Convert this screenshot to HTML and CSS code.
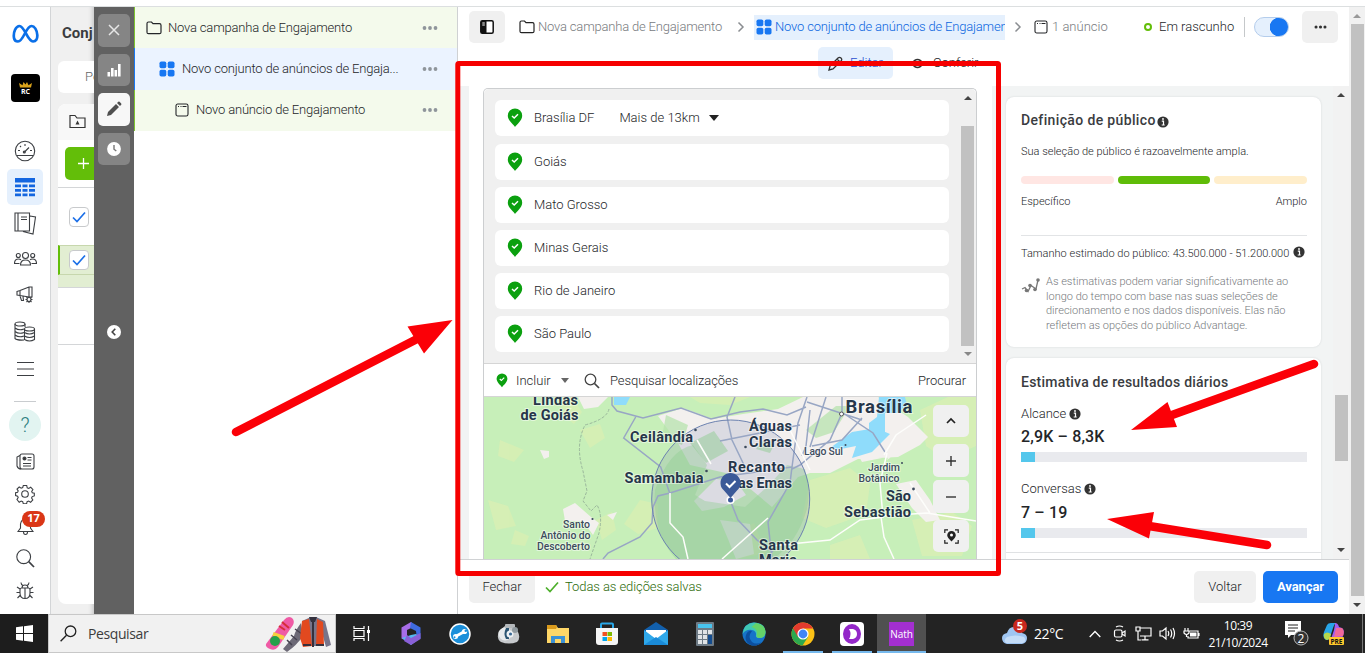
FILE: index.html
```html
<!DOCTYPE html>
<html lang="pt-BR">
<head>
<meta charset="utf-8">
<title>Gerenciador de Anúncios</title>
<link rel="stylesheet" href="styles.css">
</head>
<body>
<svg class="defs" width="0" height="0">
  <symbol id="pin" viewBox="0 0 16 20"><path d="M8 19C6.500 16.500 .8 12.500 .8 7.700a7.200 7.200 0 0 1 14.400 0C15.200 12.500 9.500 16.500 8 19z" fill="#0ba00f"/><path d="M5 8l2.200 2 3.800-3.800" fill="none" stroke="#fff" stroke-width="1.500"/></symbol>
  <symbol id="folder" viewBox="0 0 16 14"><path d="M1 11.200V2.500Q1 1 2.500 1H5.500l1.500 1.700h6.500Q15 2.700 15 4.200v7q0 1.500-1.500 1.500h-11Q1 12.700 1 11.200z" fill="none" stroke="currentColor" stroke-width="1.200"/></symbol>
  <symbol id="grid" viewBox="0 0 16 16"><g fill="#1877f2"><rect x=".5" y=".5" width="6.800" height="6.800" rx="1.800"/><rect x="8.700" y=".5" width="6.800" height="6.800" rx="1.800"/><rect x=".5" y="8.700" width="6.800" height="6.800" rx="1.800"/><rect x="8.700" y="8.700" width="6.800" height="6.800" rx="1.800"/></g></symbol>
  <symbol id="ad" viewBox="0 0 14 14"><rect x="1" y="1" width="12" height="12" rx="1.800" fill="none" stroke="currentColor" stroke-width="1.100"/><path d="M3 3.500h1M5.500 3.500h1M7.500 3.500h4" stroke="currentColor"/></symbol>
  <symbol id="dots" viewBox="0 0 16 4"><g fill="currentColor"><circle cx="2.500" cy="2" r="1.900"/><circle cx="8" cy="2" r="1.900"/><circle cx="13.500" cy="2" r="1.900"/></g></symbol>
  <symbol id="info" viewBox="0 0 12 12"><circle cx="6" cy="6" r="5.600" fill="#333"/><path d="M4.800 5.200H6.500V9M4.700 9h3" fill="none" stroke="#fff" stroke-width="1.200"/><circle cx="6" cy="3" r=".9" fill="#fff"/></symbol>
  <symbol id="chev" viewBox="0 0 8 12"><path d="M1.500 1.500L6 6l-4.500 4.500" fill="none" stroke="#8a8d91" stroke-width="1.500"/></symbol>
  <symbol id="tick" viewBox="0 0 14 12"><path d="M1 6.500l4 4L13 1.500" fill="none" stroke="currentColor" stroke-width="1.700"/></symbol>
</svg>

<div class="screen">
<div class="app">
  <nav class="rail">
    <div class="rail-logo"><svg width="27" height="20" viewBox="0 0 27 20"><path d="M2 14C1 8 4 2 7.500 2c5 0 8 15.500 13.500 15.500 3 0 4.500-2.500 4.300-6.500C25 6 22.500 2 19.500 2c-5.500 0-8 15.500-13.500 15.500C3.500 17.500 2.300 16 2 14z" fill="none" stroke="#0a6fe8" stroke-width="2.700"/></svg></div>
    <div class="rail-logo"><svg width="29" height="28" viewBox="0 0 29 28"><rect width="29" height="28" rx="4" fill="#000"/><path d="M9 13.500L8 9l3.500 2.200L12.500 8l2 2.500L16 8l1.500 3.200L21 9l-1 4.500z" fill="#d9a21b"/><text x="14.500" y="20" class="rc">RC</text></svg></div>
    <div class="rail-item first"><svg width="22" height="22" viewBox="0 0 22 22" class="ln"><circle cx="11" cy="11" r="9.700"/><path d="M3 15.500h16M10 12.500l5-5M4 10.500h2M16 10.500h2M11 4v2M6 6l1 1"/><circle cx="10.300" cy="12" r="1"/></svg></div>
    <div class="rail-item on"><svg width="20" height="19" viewBox="0 0 20 19"><path d="M0 0h20v4.500H0zM0 6.500h6v2.700H0zM7.500 6.500h5v2.700h-5zM14 6.500h6v2.700h-6zM0 11h6v2.700H0zM7.500 11h5v2.700h-5zM14 11h6v2.700h-6zM0 15.500h6v2.700H0zM7.500 15.500h5v2.700h-5zM14 15.500h6v2.700h-6z" fill="#1466e0"/></svg></div>
    <div class="rail-item"><svg width="23" height="23" viewBox="0 0 23 23" class="ln"><path d="M1 1h14.500v18H1zM4 1v18M7 5h6M7 7.500h6M16 4l5.500 1-2.500 17-10-2.500"/></svg></div>
    <div class="rail-item"><svg width="23" height="16" viewBox="0 0 23 16" class="ln"><circle cx="11.500" cy="4.500" r="3"/><circle cx="4.300" cy="4.500" r="2"/><circle cx="18.700" cy="4.500" r="2"/><path d="M6.500 14q0-5 5-5t5 5zM5.500 12.500h-5q0-4.500 4-4.500 1.500 0 2.500.8M17.500 12.500h5q0-4.500-4-4.500-1.500 0-2.500.8"/></svg></div>
    <div class="rail-item"><svg width="18" height="18" viewBox="0 0 18 18" class="ln"><path d="M1 5.500l3-1 9-3.500h3v10h-3L4 9.500l-3-.5zM4 4.500v5M13 1v9M4 10l1.500 4.500h2L7 10.500"/><circle cx="13" cy="13.500" r="2"/><path d="M13 10v1.500M13 15.500v1.500M9.500 13.500H11M15 13.500h1.500M10.500 11l1 1M15.500 16l-1-1M15.500 11l-1 1M10.500 16l1-1"/></svg></div>
    <div class="rail-item"><svg width="22" height="21" viewBox="0 0 22 21" class="ln"><ellipse cx="6" cy="3" rx="5" ry="2"/><path d="M1 3v14.500q2 2 9 1.500M11 3v3M1 7q4 3 9 1M1 10.500q4 3 9 1M1 14q4 3 9 1"/><ellipse cx="15.500" cy="8" rx="5" ry="2"/><path d="M10.500 8v10.500q5 3 10 0V8M10.500 11.500q5 3 10 0M10.500 15q5 3 10 0"/></svg></div>
    <div class="rail-item menu"><svg width="17" height="14" viewBox="0 0 17 14" class="ln"><path d="M0 .5h17M0 7h17M0 13.500h17"/></svg></div>
    <div class="rail-rule"></div>
    <div class="rail-help">?</div>
    <div class="rail-item s news"><svg width="19" height="17" viewBox="0 0 19 17" class="ln"><rect x="4" y="1" width="14" height="15" rx="2"/><path d="M4 2.500L1 4v9q1 3 4 3M7 10.500h8M7 13h8M11.500 4.500h4M11.500 7h4"/><circle cx="8.500" cy="5.500" r="1.500" fill="#333"/></svg></div>
    <div class="rail-item s"><svg width="20" height="20" viewBox="0 0 20 20" class="ln"><circle cx="10" cy="10" r="3.300"/><path d="M8.300 1.500h3.400l.5 2.300 1.500.6 2-1.200 2.200 2.300-1.200 2 .6 1.300 2 .5v2.600l-2.100.7-.6 1.400 1.200 2-2.200 2.300-2-1.200-1.500.6-.5 2H8.300l-.6-2-1.500-.6-2 1.200L2 15.500l1.200-2-.6-1.400-2-.6V8.800l2-.5.6-1.400L2 5l2.200-2 2 1.200 1.500-.6z"/></svg></div>
    <div class="rail-item s bell"><svg width="17" height="19" viewBox="0 0 17 19" class="ln"><path d="M1 14.500L3.500 11V7q1-5 5-5t5 5v4l2.500 3.500zM6.500 15q0 2.500 2 2.500t2-2.500"/></svg><span class="badge">17</span></div>
    <div class="rail-item s"><svg width="19" height="19" viewBox="0 0 19 19" class="ln"><circle cx="7.700" cy="7.700" r="6.900"/><path d="M12.700 12.700L18 18" stroke-width="1.700"/></svg></div>
    <div class="rail-item s"><svg width="18" height="18" viewBox="0 0 18 18" class="ln"><path d="M4 8q0-2 1.500-2h7Q14 6 14 8v3q0 5.500-5 5.500T4 11zM9 6v10.500M6 6q0-3 3-3t3 3M5 .5q0 2 2 3M13 .5q0 2-2 3M4 7L1 5M14 7l3-2M4 10.500H.5M14 10.500h3.500M4.500 13L1.500 16M13.500 13l3 3"/></svg></div>
  </nav>

  <section class="backdrop">
    <div class="bd-title">Conj</div>
    <div class="bd-search">Pe</div>
    <div class="bd-card">
      <div class="bd-tab"><svg width="17" height="15" viewBox="0 0 17 15"><path d="M1 13.500V1.500h5l2 2.500h8v9.500z" fill="none" stroke="#333" stroke-width="1.200"/><path d="M6.500 10.500l2-4 2 4z" fill="#333"/></svg></div>
      <div class="bd-btn"><svg width="11" height="11" viewBox="0 0 11 11"><path d="M0 5.500h11M5.500 0v11" stroke="#fff" stroke-width="1.300"/></svg></div>
      <div class="bd-row"><span class="cb"><svg width="14" height="12"><use href="#tick"/></svg></span></div>
      <div class="bd-row sel"><span class="cb"><svg width="14" height="12"><use href="#tick"/></svg></span></div>
      <div class="bd-sub"></div>
      <div class="bd-gap"></div>
    </div>
  </section>

  <aside class="dark">
    <div class="db"><svg width="14" height="14" viewBox="0 0 14 14"><path d="M2 2l10 10M12 2L2 12" stroke="#e6e6e6" stroke-width="1.500"/></svg></div>
    <div class="db"><svg width="14" height="14" viewBox="0 0 14 14" fill="#fff"><path d="M.5 9h2.600v4.500H.5zM4 5h2.600v8.500H4zM7.500 7h2.600v6.500H7.500zM11 1h2.600v12.500H11z"/></svg></div>
    <div class="db act"><svg width="16" height="16" viewBox="0 0 16 16"><path d="M1 15l1-4 8-8 3 3-8 8zM11 2l1.300-1.200q.7-.5 1.300 0L15.200 2.400q.5.700 0 1.300L14 5z" fill="#4f4f4f"/></svg></div>
    <div class="db"><svg width="14" height="14" viewBox="0 0 14 14"><circle cx="7" cy="7" r="6.900" fill="#fff"/><path d="M7 3v4.200l2.300 1.800" fill="none" stroke="#777" stroke-width="1.400"/></svg></div>
    <div class="db-fold"><svg width="14" height="14" viewBox="0 0 14 14"><circle cx="7" cy="7" r="7" fill="#fff"/><path d="M8.300 3.800L5.200 7l3.100 3.200" fill="none" stroke="#444" stroke-width="1.600"/></svg></div>
  </aside>

  <section class="tree">
    <div class="node g"><svg width="16" height="14"><use href="#folder"/></svg><span class="t-a">Nova campanha de Engajamento</span><svg class="more" width="16" height="4"><use href="#dots"/></svg></div>
    <div class="node b"><svg width="16" height="16"><use href="#grid"/></svg><span class="t-b">Novo conjunto de anúncios de Engaja...</span><svg class="more" width="16" height="4"><use href="#dots"/></svg></div>
    <div class="node g c"><svg width="14" height="14"><use href="#ad"/></svg><span class="t-c">Novo anúncio de Engajamento</span><svg class="more" width="16" height="4"><use href="#dots"/></svg></div>
  </section>

  <main class="main">
    <header class="crumbs">
      <div class="sq"><svg width="14" height="14" viewBox="0 0 14 14"><rect x=".8" y=".8" width="12.400" height="12.400" rx="1.500" fill="#fff" stroke="#111" stroke-width="1.500"/><path d="M1 1h5.500v12H1z" fill="#111"/><path d="M2.300 3h2.500M2.300 5h2.500" stroke="#fff"/></svg></div>
      <svg class="cf" width="16" height="14"><use href="#folder"/></svg>
      <span class="c-a">Nova campanha de Engajamento</span>
      <svg class="c1" width="8" height="12"><use href="#chev"/></svg>
      <div class="c-on"><svg width="16" height="16"><use href="#grid"/></svg><span>Novo conjunto de anúncios de Engajamento</span></div>
      <svg class="c2" width="8" height="12"><use href="#chev"/></svg>
      <svg class="c3" width="14" height="14"><use href="#ad"/></svg>
      <span class="c-n">1 anúncio</span>
      <span class="ring"></span><span class="c-s">Em rascunho</span>
      <span class="vr"></span><span class="toggle"></span>
      <div class="sq end"><svg width="13" height="4"><use href="#dots"/></svg></div>
    </header>
    <div class="tabs">
      <div class="tab on"><svg width="15" height="15" viewBox="0 0 15 15"><path d="M1 14l1-4 8-8q1.500-1.300 3 0t0 3l-8 8zM9 3l3 3" fill="none" stroke="#333" stroke-width="1.300"/></svg><span>Editar</span></div>
      <div class="tab"><svg width="13" height="11" viewBox="0 0 13 11"><path d="M.7 5.500q5.800-8 11.600 0-5.800 8-11.600 0z" fill="none" stroke="#333" stroke-width="1.300"/><circle cx="6.500" cy="5.500" r="2.200" fill="#333"/></svg><span>Conferir</span></div>
    </div>

    <div class="body">
      <div class="gutter"></div>
      <div class="sheet">
        <div class="loc">
          <div class="list">
            <div class="items">
              <div class="it first"><svg width="16" height="20"><use href="#pin"/></svg><span>Brasília DF</span><span class="km">Mais de 13km</span><i class="tri"></i></div>
              <div class="it"><svg width="16" height="20"><use href="#pin"/></svg><span>Goiás</span></div>
              <div class="it"><svg width="16" height="20"><use href="#pin"/></svg><span>Mato Grosso</span></div>
              <div class="it"><svg width="16" height="20"><use href="#pin"/></svg><span>Minas Gerais</span></div>
              <div class="it"><svg width="16" height="20"><use href="#pin"/></svg><span>Rio de Janeiro</span></div>
              <div class="it"><svg width="16" height="20"><use href="#pin"/></svg><span>São Paulo</span></div>
            </div>
            <div class="sb1"><i class="up"></i><b></b><i class="dn"></i></div>
          </div>
          <div class="find"><svg width="12" height="15" viewBox="0 0 16 20"><use href="#pin"/></svg><span class="inc">Incluir</span><i class="tri g"></i><svg class="mag" width="16" height="16" viewBox="0 0 16 16"><circle cx="6.500" cy="6.500" r="5.300" fill="none" stroke="#444" stroke-width="1.300"/><path d="M10.500 10.500l4.500 4.500" stroke="#444" stroke-width="1.700"/></svg><span class="ph">Pesquisar localizações</span><span class="go">Procurar</span></div>
          <div class="map">
            <svg width="492" height="162" viewBox="484 397 492 162">
              <rect x="484" y="397" width="492" height="162" fill="#c7efb9"/>
              <g fill="#d9efb4" opacity=".8">
                <path d="M560 397l12 0 10 15-8 12-10-8zM690 397h60l-20 8-30-2zM580 430l20-6 5 14-15 10zM640 500l18 4 0 24-20 6-14-10zM596 520l16-8 4 18-14 10zM500 440l24 10-10 12-16-6zM488 500l20 6 8 20-20 4zM515 530l14 6-4 10-14-2z"/>
                <path d="M810 480l40-12 20 16-4 30-40 14-24-10zM920 410l30-14h26v50l-30 14-20-14zM912 520l40-8 20 14-10 30h-40zM730 535l24-12 12 30-30 6zM830 545l30-10 10 24h-40zM800 397h10l-8 12z"/>
              </g>
              <g fill="#f3f0ee">
                <path d="M658 416l25-8 30 11 30-5 35-5 25-12h75l30 20 20 20-8 8-22 12-40 2-28 14-20 0-12 4-26 30-24-20-22-14-36-8-12-22zM578 397h30l-10 10-14 2zM563 509l12-6 16 14 8 6-6 12-10-14-18 0zM607 515l10-3-4 8zM540 450l9 1 0 6-5 2zM696 503l14-10 10 2-8 8-10 8zM694 501l22-22 20 2 10 14-22 12-22 4zM720 520l30 4 4 30-18 5-8-20zM896 484l20-4 14 20 10 20-14 2-14-14zM887 460l10-26 14-6 2 14zM850 440l12 4 20 14-20 4z"/>
              </g>
              <g fill="#b7e3ae"><path d="M666 415l22 10-6 20-20-8zM690 443l24-12 14 20-22 12zM806 430l30-24 14 0-16 26-18 6zM762 441l12 4-4 8-14-4z" opacity=".75"/></g>
              <g fill="#8fdcfb"><path d="M614 397h16l-4 8-12 0zM879 397h26l2 8-10 8-12 0 0 22-16 0 0-12 8-6zM830 448l22-16 24-4 14 6-18 18-20 6 4-12-20 4z"/></g>
              <path d="M730.700 420a79 79 0 1 1 0 158 79 79 0 1 1 0-158z" fill="#6275a6" fill-opacity=".17"/>
              <path d="M655 490q14-40 38-45l14 20-12 30 10 6 40 6 24-22 18-20 18 4q6 20 2 40-10 34-34 50H676q-24-26-21-69z" fill="#8fce91" fill-opacity=".4"/>
              <g fill="none" stroke="#98a6c4" stroke-width="1.500">
                <path d="M612 397v8l5 6 26 7 38-10 30 11 29-7 23-3 24 6 19-8M635.700 417l-12 21 37 29 9 26M603 559l5-6 32-16 12-14 1-16 5-11 12-3 50-16 72-10M735 397l-8 20 5 23 13 27M807 397l-9 26-6 44-2 16-22 39 4 37M730 500l8 20 19 20 16 12M807 402l55 18M842 397v16l-12 27-30 25-8 4M843 413l30 20 12 19M810 410l-4 36-4 10M826 397l-16 50M862 418l-20 22-30 6M720 441l30-6 50-10"/>
              </g>
              <g fill="none" stroke="#fdfdfb" stroke-width="1.500">
                <path d="M670 493v30l13 14 5 22M722 559l46-41M887 453l-7 30 3 34-23 3-30 20-30 3-28 3M881 517l3 20 10 22M883 516l44-3 49 8M697 440l14 24M790 430l20 40M884 455l12-20 30-20M930 513l-20-30"/>
              </g>
              <path d="M609 409q-2 10-24 16-10 20-2 46l4 20-4 10 8 10 6-6q6 10 2 28l-9 26" fill="none" stroke="#9bb89c" stroke-dasharray="3 1.500"/>
              <circle cx="730.700" cy="499" r="79" fill="none" stroke="#6c82b0" stroke-width="1"/>
              <g class="ml">
                <text x="533" y="405" textLength="45">Lindas</text><text x="520.500" y="420" textLength="58">de Goiás</text>
                <text x="630" y="442" textLength="63">Ceilândia</text><text x="624.500" y="483" textLength="79">Samambaia</text>
                <text x="749" y="431" textLength="43">Águas</text><text x="749" y="446.500" textLength="43">Claras</text>
                <text x="728" y="472" textLength="57">Recanto</text><text x="730" y="487.500" textLength="62">das Emas</text>
                <text x="886" y="501" textLength="25">São</text><text x="844" y="516.500" textLength="67">Sebastião</text>
                <text x="759" y="550" textLength="39">Santa</text><text x="759" y="565" textLength="38">Maria</text>
              </g>
              <text class="ml big" x="845.500" y="412.500" textLength="67">Brasília</text>
              <g class="ml sm">
                <text x="563" y="527.500" textLength="27">Santo</text><text x="540.500" y="538.500" textLength="50">Antônio do</text><text x="537" y="549.500" textLength="53">Descoberto</text>
                <text x="804" y="454.500" textLength="39">Lago Sul</text><text x="868" y="471" textLength="32">Jardim</text><text x="858.500" y="482" textLength="41">Botânico</text>
              </g>
              <g fill="#3c4a5c"><circle cx="695.500" cy="430" r="1.300"/><circle cx="706.500" cy="471" r="1.300"/><circle cx="745.500" cy="447" r="1.300"/><circle cx="592.500" cy="519" r="1.100"/><circle cx="845.500" cy="445" r="1"/><circle cx="902" cy="463" r="1"/><circle cx="913.500" cy="489" r="1.400"/></g>
              <circle cx="841.500" cy="414" r="2" fill="#fff" stroke="#555"/>
              <circle cx="730.500" cy="500" r="3.300" fill="#3c5a9c" stroke="#fff" stroke-width="1.600"/>
              <path d="M730.500 498l-6.500-7.500a10 10 0 1 1 13 0z" fill="#3b5998"/><path d="M726 483.500l3.500 3.500 6-6" fill="none" stroke="#fff" stroke-width="2"/>
            </svg>
            <div class="mapctl">
              <div class="mc"><svg width="10" height="8" viewBox="0 0 10 8"><path d="M1 6l4-4 4 4" fill="none" stroke="#222" stroke-width="1.700"/></svg></div>
              <div class="mc m2"><svg width="10" height="10" viewBox="0 0 10 10"><path d="M0 5h10M5 0v10" stroke="#333" stroke-width="1.400"/></svg></div>
              <div class="mc m3"><svg width="10" height="10" viewBox="0 0 10 10"><path d="M0 5h10" stroke="#333" stroke-width="1.400"/></svg></div>
              <div class="mc m4"><svg width="15" height="15" viewBox="0 0 15 15"><path d="M4 .8H.8V4M11 .8h3.200V4M4 14.200H.8V11M11 14.200h3.200V11" fill="none" stroke="#222" stroke-width="1.200"/><path d="M7.500 12.500Q3.200 8.500 3.200 6.300a4.300 4.300 0 0 1 8.600 0q0 2.200-4.300 6.200z" fill="#222"/><circle cx="7.500" cy="6" r="1.500" fill="#fff"/></svg></div>
            </div>
          </div>
        </div>
      </div>
      <div class="side">
        <div class="card k1">
          <h3><span class="h-a">Definição de público</span><svg width="12" height="12"><use href="#info"/></svg></h3>
          <p class="s-a">Sua seleção de público é razoavelmente ampla.</p>
          <div class="meter"><i></i><i></i><i></i></div>
          <div class="ends"><span class="e1">Específico</span><span>Amplo</span></div>
          <div class="size"><span>Tamanho estimado do público:</span><span class="num">43.500.000 - 51.200.000</span><svg width="12" height="12"><use href="#info"/></svg></div>
          <div class="note"><svg width="19" height="15" viewBox="0 0 19 15"><path d="M1 11l3-1.500 3 4 3-6 5 3.500 2-9" fill="none" stroke="#777" stroke-width="1.300"/><g fill="#777"><circle cx="5.500" cy="12.500" r="1.800"/><circle cx="9" cy="7.500" r="1.800"/><circle cx="14" cy="11.500" r="1.800"/><circle cx="17" cy="2" r="1.800"/></g></svg><div><span>As estimativas podem variar significativamente ao</span><br><span>longo do tempo com base nas suas seleções de</span><br><span>direcionamento e nos dados disponíveis. Elas não</span><br><span>refletem as opções do público Advantage.</span></div></div>
        </div>
        <div class="card k2">
          <h3><span class="h-b">Estimativa de resultados diários</span></h3>
          <div class="lab">Alcance<svg width="12" height="12"><use href="#info"/></svg></div>
          <div class="val v1">2,9K – 8,3K</div><div class="bar"><i></i></div>
          <div class="lab l2">Conversas<svg width="12" height="12"><use href="#info"/></svg></div>
          <div class="val v2">7 – 19</div><div class="bar"><i></i></div>
          <div class="cut"></div>
        </div>
      </div>
      <div class="sb2"><i class="up"></i><b></b><i class="dn"></i></div>
    </div>

    <footer class="foot">
      <div class="fb f1">Fechar</div><svg class="ok" width="14" height="12"><use href="#tick"/></svg><span class="saved">Todas as edições salvas</span>
      <div class="fb f2">Voltar</div><div class="fb f3">Avançar</div>
    </footer>
  </main>
  <div class="sb3"><i class="up"></i><b></b><i class="dn"></i></div>
</div>

<div class="taskbar">
  <div class="start"><svg width="17" height="17" viewBox="0 0 17 17" fill="#fff"><path d="M0 2.300L7 1.300V8H0zM8 1.200L17 0v8H8zM0 9h7v6.700L0 14.700zM8 9h9v8l-9-1.200z"/></svg></div>
  <div class="search"><svg width="17" height="17" viewBox="0 0 17 17"><circle cx="10.500" cy="6.300" r="5.300" fill="none" stroke="#222" stroke-width="1.300"/><path d="M6.500 10.200L.6 16.200" stroke="#222" stroke-width="1.400"/></svg><span>Pesquisar</span>
    <svg class="art" width="66" height="37" viewBox="0 0 66 37"><path d="M1 29L19 5q4-5 8-2 3 3 1 7L13 32q-3 4-8 2-5-2-4-5z" fill="#ef5aa5"/><path d="M8 19l11 4" stroke="#f6cf3e" stroke-width="4"/><path d="M17 7l7 6M14 11l6 4" stroke="#d52e38" stroke-width="2"/><circle cx="10" cy="26" r="5" fill="#25a04a"/><path d="M36 8q-6 8-7 13L18 34l4 3q10-7 16-16z" fill="#6d6a77"/><path d="M26 20l6 5M22 25l5 5M30 14l7 5" stroke="#454250" stroke-width="1.500"/><path d="M37 6l9-4h5l9 4 6 24-5 2-4-14v13H38z" fill="#77748a"/><path d="M37 6l7-2 3 27-9 1-3-9zM52 4l6 3 1 23-8 1z" fill="#e2491f"/><path d="M44 2h8l-2 5h-4z" fill="#34323f"/><path d="M48 6v26M38 30h8M51 30h8" stroke="#35303c" stroke-width="2"/></svg>
  </div>
  <div class="apps">
    <div class="ta"><svg width="18" height="17" viewBox="0 0 18 17" fill="none" stroke="#fff" stroke-width="1.200"><path d="M1 1v2.500h10V1M1 16v-2.500h10V16M1 5.500h10v6H1zM15.500 1v15"/><path d="M14 5h3v3h-3z" fill="#fff" stroke="none"/></svg></div>
    <div class="ta"><svg width="22" height="23" viewBox="0 0 22 23"><path d="M11 0L1.500 5.500v11L8 20l3-3-4-3V8l8-4z" fill="#a76de8"/><path d="M11 0l9.500 5.500v11L17 18l-1-9-6-3z" fill="#3f6be0"/><path d="M2 16l9-3 5-1 4.500 4L11 23z" fill="#55b9ef"/><path d="M7 13l4 3 9.500-5v6L11 23l-7-4z" fill="#8a60d8"/></svg></div>
    <div class="ta"><svg width="22" height="22" viewBox="0 0 22 22"><circle cx="11" cy="11" r="10" fill="#1b8fda" stroke="#fff" stroke-width="1.500"/><path d="M6.500 13.500l9-5" stroke="#fff" stroke-width="2.800"/><circle cx="6.500" cy="13.500" r="2.500" fill="#fff"/><circle cx="15.500" cy="8.500" r="2.600" fill="#fff"/><circle cx="16.800" cy="7.800" r="1.300" fill="#1b8fda"/><circle cx="5.500" cy="14.300" r="1" fill="#1b8fda"/></svg></div>
    <div class="ta"><svg width="23" height="21" viewBox="0 0 23 21"><path d="M2 8q-3 8 2 11 8 3 16 0 4-4 1-10L16 3H8z" fill="#c6c9cc"/><circle cx="8" cy="11" r="6.500" fill="#e8ebed"/><path d="M9 5h3v11H9q-3-5 0-11z" fill="#2b5573"/><circle cx="13" cy="11" r="3.500" fill="#eef2f5"/><circle cx="13.500" cy="11" r="1.600" fill="#3a6a96"/><rect x="8" y="1" width="10" height="4" rx="1" fill="#b4b8bb"/><circle cx="18" cy="7" r="3" fill="#8f999f"/></svg></div>
    <div class="ta"><svg width="22" height="20" viewBox="0 0 22 20"><path d="M0 1h9l2 3h11v15H0z" fill="#ffd767"/><path d="M0 1h9l1 2-1 2H0z" fill="#d99a1c"/><path d="M4 19v-7h14v7h-4v-4H8v4z" fill="#3d92d5"/></svg></div>
    <div class="ta"><svg width="24" height="24" viewBox="0 0 24 24"><path d="M6 7V2.500Q6 1.500 7 1.500h10q1 0 1 1V7" fill="none" stroke="#29a7e8" stroke-width="2"/><path d="M1 6h22v14q0 3-3 3H4q-3 0-3-3z" fill="#f5f5f5"/><path d="M7.500 10H12v4H7.500z" fill="#f25022"/><path d="M12.500 10H17v4h-4.500z" fill="#7fba00"/><path d="M7.500 15H12v4H7.500z" fill="#00a4ef"/><path d="M12.500 15H17v4h-4.500z" fill="#ffb900"/></svg></div>
    <div class="ta"><svg width="24" height="23" viewBox="0 0 24 23"><path d="M0 8L12 0l12 8v15H0z" fill="#1260ad"/><path d="M2 8h20v8H2z" fill="#fff"/><path d="M0 8l12 9 12-9v15H0z" fill="#2fa8ea"/><path d="M0 23l12-8 12 8z" fill="#1a8bd8"/></svg></div>
    <div class="ta"><svg width="18" height="24" viewBox="0 0 18 24"><rect width="18" height="24" rx="1" fill="#6d7a85"/><path d="M2 2h14v4H2z" fill="#48c3ee"/><path d="M2 8h4v4H2zM7 8h4v4H7zM12 8h4v4h-4zM2 13h4v4H2zM7 13h4v4H7zM2 18h4v4H2zM7 18h4v4H7z" fill="#dfe3e6"/><path d="M12 13h4v9h-4z" fill="#144c8e"/></svg></div>
    <div class="ta"><svg width="24" height="24" viewBox="0 0 24 24"><circle cx="12" cy="12" r="11.500" fill="#1673c9"/><path d="M.5 12Q2 1 12 .5 23 1 23.500 10q0 6-6 6-4 0-3.500-3 .5-4-4-5Q4 7 .5 12z" fill="#40c8b4"/><path d="M14 1q9 2 9.500 9-.5 5-5 6-4 0-4-2 2-7-5-9z" fill="#64d268"/><path d="M10 9q-5 6 0 11 4 3 10 0-5 5-11 3Q2 20 4 13q2-5 6-4z" fill="#0c4f9f"/></svg></div>
    <div class="ta run"><svg width="24" height="24" viewBox="0 0 24 24"><circle cx="12" cy="12" r="11.500" fill="#fbc116"/><path d="M12 12L2 6.300A11.500 11.500 0 0 0 11.500 23.500L17 15z" fill="#2da94f"/><path d="M2 6.300A11.500 11.500 0 0 1 22 6.500H12v6L7 15z" fill="#e33b2e"/><circle cx="12" cy="12" r="5.600" fill="#fff"/><circle cx="12" cy="12" r="4.400" fill="#4285f4"/></svg></div>
    <div class="ta run"><svg width="24" height="24" viewBox="0 0 24 24"><rect width="24" height="24" rx="4" fill="#fff"/><ellipse cx="12" cy="12" rx="9" ry="10" fill="#9427c9"/><path d="M9 7h4q4 1 4 5t-4 5H9q3-5 0-10z" fill="#fff"/></svg></div>
    <div class="ta run cur"><span class="nath">Nath</span></div>
  </div>
  <div class="tray">
    <svg class="wx" width="26" height="26" viewBox="0 0 26 26"><path d="M5 25q-5-1-5-6 0-4 5-5 2-7 8-6 6 0 7 6 5 1 5 5 0 5-5 6z" fill="#9fc5f2"/><path d="M4 24q-3-3 1-6 8-3 17 0 3 4-1 6z" fill="#c5ddf8"/><circle cx="18" cy="7" r="7" fill="#c8281e"/><text x="18" y="11" class="n5">5</text></svg>
    <span class="temp">22°C</span>
    <svg class="y1" width="12" height="8" viewBox="0 0 12 8" fill="none" stroke="#fff" stroke-width="1.300"><path d="M.7 7L6 1.500 11.300 7"/></svg>
    <svg class="y2" width="13" height="17" viewBox="0 0 13 17" fill="none" stroke="#fff" stroke-width="1.200"><rect x="1.500" y="5" width="7.500" height="7" rx="1.500"/><path d="M9 8l3-2v5L9 9M3 2q3.500-2 7 0M3 15q3.500 2 7 0"/></svg>
    <svg class="y3" width="17" height="15" viewBox="0 0 17 15" fill="none" stroke="#fff" stroke-width="1.200"><path d="M5 2h11v8H5M10 10v3.500M6.500 13.800h7M1 1h4v4H1zM3 5v9h3"/></svg>
    <svg class="y4" width="17" height="15" viewBox="0 0 17 15" fill="none" stroke="#fff" stroke-width="1.200"><path d="M1 5h2.500L7 2v11L3.500 10H1zM9 5q1.500 2.500 0 5M11.500 3.500q2.500 4 0 8M14 2q3 5.500 0 11"/></svg>
    <svg class="y5" width="17" height="14" viewBox="0 0 17 14" fill="none" stroke="#fff" stroke-width="1.200"><path d="M6 4h9v7H5V9M16 6v3M2 1v3M5 1v3M1 4h5v2q-2.500 3-5 0zM3.500 7v3"/><path d="M7 5.500h6.500v4H7z" fill="#fff" stroke="none"/></svg>
    <div class="clock"><span class="hh">10:39</span><span class="dd">21/10/2024</span></div>
    <svg class="y6" width="24" height="25" viewBox="0 0 24 25"><path d="M0 0h16v14H6l-3 3v-3H0z" fill="#fff"/><path d="M3 4h10M3 7h10M3 10h7" stroke="#222" stroke-width="1.200"/><circle cx="16" cy="17" r="7" fill="#333" stroke="#bbb"/><text x="16" y="21.500" class="n2t">2</text></svg>
    <svg class="y7" width="22" height="22" viewBox="0 0 22 22"><path d="M4 2q1-2 4-2h5q-2 1-3 5L7 14q-1 3-4 3-4-2-2-8z" fill="#28a5e8"/><path d="M1 11q3-3 7 0l-1 4q-1 2-3 2-4-1-3-6z" fill="#b6d94c"/><path d="M12 0q3 0 4 4l3 1q3 2 1 8-1 3-4 3H8l3-9q1-5 1-7z" fill="#a35df0"/><path d="M13 5h6q3 3 1 8l-9 1z" fill="#f0699a"/><rect x="6" y="14" width="15" height="8" rx="1" fill="#ffc82c"/><text x="13.500" y="20.700" class="pre">PRE</text></svg>
    <span class="peek"></span>
  </div>
</div>

<svg class="marks" width="1365" height="653" viewBox="0 0 1365 653">
  <rect x="457.800" y="63.500" width="540.700" height="510" rx="1" fill="none" stroke="#f60000" stroke-width="5"/>
  <g stroke="#fb0007" stroke-width="8.500" stroke-linecap="round"><path d="M236 432L418 338.500M1314 364l-142 51M1267 545l-118-19"/></g>
  <g fill="#fb0007"><path d="M452.500 320l-45 6.500 16.500 27zM1131 430l36.500-28 9.500 25zM1107 519l47-7-5 26.500z"/></g>
</svg>
</div>
</body>
</html>
```
FILE: styles.css
```css
* { box-sizing: border-box; }
body { margin: 0; font: 300 13px/16px Roboto, "Liberation Sans", sans-serif; color: #232528; background: #fff; overflow: hidden; }
.defs { position: absolute; }
svg { display: block; flex: none; }
span, .val { white-space: nowrap; }
.screen { position: relative; width: 1365px; height: 653px; display: flex; flex-direction: column; overflow: hidden; }
.app { height: 614px; padding-top: 7px; display: flex; background: linear-gradient(#fff 6px, #dcdfe0 6px, #dcdfe0 7px, #fff 7px); }

.rail { width: 51px; border-right: 1px solid #d3d5d7; display: flex; flex-direction: column; align-items: center; }
.rail-logo { height: 54px; display: flex; align-items: center; }
.rail-item { width: 36px; height: 36px; display: flex; align-items: center; justify-content: center; border-radius: 5px; }
.rail-item.first { margin-top: 18px; }
.rail-item.on { background: #e5f0fd; }
.rail-item.s { height: 32.5px; }
.rail-item.news { margin-top: 4px; }
.rail-item.menu { padding-top: 4px; }
.ln { fill: none; stroke: #3c3f43; stroke-width: 1.1; }
.rc { font: bold 7px "Open Sans"; fill: #fff; text-anchor: middle; }
.rail-rule { width: 22px; height: 1px; background: #c9cccf; margin: 16px 0 7px; }
.rail-help { width: 32px; height: 32px; border-radius: 50%; background: #e2f4f1; color: #2c7f80; font: 300 20px/32px Roboto; text-align: center; }
.bell { position: relative; }
.badge { position: absolute; left: 15px; top: 1px; width: 23px; height: 16px; border-radius: 8px; background: #da3616; color: #fff; font: bold 11px/14px "Open Sans"; text-align: center; }

.backdrop { width: 43px; padding-left: 7px; background: #f0f0f0; overflow: hidden; box-shadow: inset -5px 0 5px -4px #bbb; display: flex; flex-direction: column; }
.bd-title { margin-left: 4px; height: 54px; font-size: 15px; line-height: 53px; font-weight: 700; color: #3a3c3f; }
.bd-search { height: 32px; border-radius: 6px 0 0 6px; background: #fff; padding-left: 27px; line-height: 31px; color: #666; flex: none; overflow: hidden; }
.bd-card { margin-top: 11px; height: 500px; border-radius: 8px 0 0 8px; background: #fff; overflow: hidden; }
.bd-tab { height: 36px; background: #f8f8f8; padding: 10px 0 0 11px; }
.bd-btn { margin: 7px 0 7px 7px; height: 33px; border-radius: 5px 0 0 5px; background: #63be09; padding: 11px 0 0 13px; }
.bd-row { height: 58px; border-top: 1px solid #d4d6d8; padding: 19px 0 0 11px; }
.bd-row.sel { height: 30px; background: #e2eed2; border-left: 2px solid #63be09; border-bottom: 1px solid #c7d7ad; padding: 4px 0 0 9px; border-top-color: #c7d7ad; }
.bd-sub { height: 13px; background: #e2eed2; border-bottom: 1px solid #d4d6d8; }
.bd-gap { height: 57px; border-bottom: 1px solid #d4d6d8; }
.cb { display: flex; width: 20px; height: 20px; border: 1px solid #c8cacc; border-radius: 4px; background: #fff; align-items: center; justify-content: center; color: #1b6fe8; }

.dark { width: 40px; background: #616161; padding: 7px 4px 0; display: flex; flex-direction: column; gap: 7px; }
.db { height: 32.5px; border-radius: 5px; background: #858585; display: flex; align-items: center; justify-content: center; }
.db.act { background: #f7f7f7; }
.db-fold { margin: 153px auto 0; }

.tree { width: 324px; border-right: 1px solid #cfd1d3; }
.node { width: 323px; height: 41.3px; display: flex; align-items: center; padding: 1px 19px 0 11px; border-left: 1px solid #7cc32e; background: #f4faec; }
.node.b { background: #ebf3ff; border-left-color: #1877f2; padding-left: 24px; }
.node.c { padding: 0 19px 0 40px; }
.node span { margin-left: 6px; }
.node.b span, .node.c span { margin-left: 7px; }
.more { margin-left: auto; color: #8f959b; }
.t-a, .t-b, .t-c { letter-spacing: -.18px; }

.main { width: 891px; display: flex; flex-direction: column; }
.crumbs { height: 40px; padding: 0 11px; display: flex; align-items: center; }
.sq { width: 36px; height: 32px; border-radius: 5px; background: #f0f0f0; display: flex; align-items: center; justify-content: center; flex: none; }
.cf { margin-left: 14px; color: #222; }
.c-a { width: 186px; margin-left: 3px; color: #777a7e; letter-spacing: -.18px; }
.c1 { margin-left: 13px; }
.c-on { margin-left: 9px; width: 251px; height: 25px; background: #e5f0fd; display: flex; align-items: center; padding-left: 2px; overflow: hidden; color: #0a66e0; flex: none; letter-spacing: -.18px; }
.c-on span { margin-left: 3px; }
.c2 { margin-left: 9px; }
.c3 { margin-left: 12px; }
.c-n { width: 56px; margin-left: 4px; color: #777a7e; }
.ring { width: 8px; height: 8px; border: 2.4px solid #63be09; border-radius: 50%; margin-left: 36px; flex: none; }
.c-s { width: 75px; margin-left: 7px; }
.vr { width: 1px; height: 20px; background: #c5c8ca; margin-left: 10px; }
.toggle { width: 35px; height: 20px; border-radius: 10px; border: 1px solid #b4cdec; background: radial-gradient(circle at 24px 9px, #1877f2 9px, #e5f0fd 9.5px); margin-left: 9px; }
.end { margin-left: auto; color: #333; }
.tabs { height: 39px; padding-left: 360px; display: flex; gap: 8px; }
.tab { height: 32px; border-radius: 5px; padding: 0 10px; display: flex; align-items: center; gap: 7px; }
.tab.on { width: 75px; background: #e5f0fd; color: #2a4fd0; }
.tab:last-child { gap: 9px; }
.body { height: 474px; display: flex; border-bottom: 1px solid #d0d2d4; }
.gutter { width: 11px; background: #f1f3f4; }
.sheet { width: 523px; padding: 2px 0 0 14px; }
.loc { width: 494px; border: 1px solid #ccced0; border-bottom: 0; border-radius: 5px 5px 0 0; }
.list { height: 275px; background: #f0f0f0; border-bottom: 1px solid #d5d5d5; border-radius: 5px 5px 0 0; display: flex; }
.items { padding: 11px 0 0 11px; width: 465px; display: flex; flex-direction: column; gap: 7px; }
.it { height: 36px; border-radius: 6px; background: #fff; padding-left: 12px; display: flex; align-items: center; }
.it.first { margin-bottom: 1px; }
.it span { margin-left: 11px; }
.it .km { margin-left: 25px; }
.tri { border: 5px solid transparent; border-top: 6px solid #222; border-bottom: 0; margin-left: 9px; }
.tri.g { border-width: 5px 4.500px 0; border-top-color: #666; margin-left: 11px; }
.up, .dn { border: 4px solid transparent; border-bottom: 4px solid #444; border-top: 0; }
.dn { border-bottom: 0; border-top: 4px solid #888; }
.sb1 { margin-left: 12px; width: 13px; display: flex; flex-direction: column; align-items: center; }
.sb1 .up { margin-top: 7px; }
.sb1 b { width: 13px; height: 220px; margin-top: 26px; background: #c1c1c1; }
.sb1 .dn { margin-top: 6px; }
.find { height: 33px; border-bottom: 1px solid #d5d5d5; display: flex; align-items: center; padding: 1px 10px 0 12px; }
.inc { margin-left: 8px; width: 34px; }
.mag { margin-left: 15px; }
.ph { margin-left: 10px; letter-spacing: -.08px; }
.go { margin-left: auto; letter-spacing: -.1px; }
.map { position: relative; width: 492px; height: 162px; overflow: hidden; }
.mapctl { position: absolute; right: 7px; top: 8px; width: 36px; }
.mc { height: 32px; border-radius: 5px; background: #f0f0f0; display: flex; align-items: center; justify-content: center; }
.m2 { margin-top: 7px; height: 33px; }
.m3 { margin-top: 3px; height: 33px; }
.m4 { margin-top: 7px; }
.ml { font: bold 14.5px Roboto; fill: #26364a; stroke: #fff; stroke-width: 2px; stroke-opacity: .5; paint-order: stroke; }
.ml.big { font-size: 18.5px; }
.ml.sm { font-size: 10.5px; font-weight: 500; fill: #3d4b5c; }

.side { width: 341px; background: #f2f4f4; padding: 11px 0 0 14px; overflow: hidden; }
.card { width: 315px; border-radius: 8px; background: #fff; padding: 0 14px 0 15px; box-shadow: 0 0 2px #d0d3d5; }
.k1 { height: 250px; }
.k2 { margin-top: 11px; height: 230px; }
.card h3 { margin: 0; padding-top: 15px; font-size: 14px; line-height: 17px; font-weight: 500; display: flex; align-items: center; gap: 1px; color: #3a3c3f; }
.h-a { letter-spacing: .36px; }
.h-b { letter-spacing: .22px; }
.k1 h3 svg { margin-top: 2px; }
.s-a { margin: 15px 0 0; font-size: 11px; line-height: 16px; white-space: nowrap; }
.meter { display: flex; gap: 4px; margin-top: 16px; }
.meter i { flex: 1; height: 8px; border-radius: 4px; background: #ffe6e3; }
.meter i:nth-child(2) { background: #5fbc08; }
.meter i:nth-child(3) { background: #ffeecb; }
.ends { display: flex; justify-content: space-between; font-size: 11px; margin-top: 10px; padding-bottom: 25px; border-bottom: 1px solid #e2e4e6; }
.size { display: flex; font-size: 11px; margin-top: 10px; }
.size .num { margin-left: 3px; }
.size svg { margin: 0 0 0 4px; }
.note { display: flex; gap: 6px; margin-top: 13px; font-size: 11px; line-height: 14.700px; color: #76797d; }
.note svg { margin-top: 3px; }
.k2 h3 { padding-top: 16px; }
.lab { margin-top: 15px; display: flex; align-items: center; gap: 3px; }
.val { font-size: 16px; line-height: 20px; font-weight: 500; margin-top: 5px; color: #232528; letter-spacing: .15px; }
.bar { height: 10px; background: #e9eaee; margin-top: 5px; }
.bar i { display: block; width: 14px; height: 10px; background: #54c7ec; }
.lab.l2 { margin-top: 19px; }
.l2 + .val { margin-top: 6px; }
.cut { border-top: 1px solid #e0e2e4; margin: 14px -14px 0 -15px; }
.sb2 { width: 16px; background: #f2f2f2; display: flex; flex-direction: column; align-items: center; }
.sb2 .up { margin-top: 7px; }
.sb2 b { width: 13px; height: 66px; background: #c1c1c1; margin-top: 298px; }
.sb2 .dn { margin-top: 87px; border-top-color: #444; }
.foot { height: 54px; padding: 11px 11px 11px; display: flex; align-items: center; }
.fb { height: 32px; line-height: 32px; border-radius: 5px; background: #f0f0f0; text-align: center; }
.f1 { width: 66px; }
.f2 { width: 62px; margin-left: auto; }
.f3 { width: 75px; margin-left: 7px; background: #1877f2; color: #fff; font-weight: 700; letter-spacing: -.1px; }
.ok { margin-left: 10px; color: #4caf2a; }
.saved { margin-left: 6px; color: #2c6a0a; letter-spacing: -.08px; }
.sb3 { width: 16px; background: #f1f1f1; display: flex; flex-direction: column; align-items: center; }
.sb3 .up { margin-top: 7px; border-bottom-color: #999; }
.sb3 b { width: 13px; height: 572px; background: #c1c1c1; margin-top: 6px; }
.sb3 .dn { margin-top: 7px; border-top-color: #444; }

.taskbar { height: 39px; background: #232323; display: flex; font-family: "Open Sans", "Noto Sans", sans-serif; font-weight: 400; color: #fff; }
.start { width: 48px; display: flex; align-items: center; justify-content: center; background: #1d1d1d; }
.search { width: 288px; background: #f1f1f1; border: 1px solid #c8c8c8; display: flex; align-items: center; color: #3c3c3c; padding-left: 11px; font-size: 14px; }
.search span { margin-left: 11px; width: 62px; letter-spacing: -.4px; }
.art { margin-left: 115px; }
.apps { width: 590px; padding-left: 1px; display: grid; grid-template-columns: repeat(12, 49.1px); }
.ta { display: flex; align-items: center; justify-content: center; }
.run { background: linear-gradient(#76b9ed, #76b9ed) center bottom / 40px 2px no-repeat; }
.cur { background: linear-gradient(#76b9ed, #76b9ed) center bottom / 49px 2px no-repeat, #505050; }
.nath { width: 25px; height: 24px; background: #a32fd0; font-size: 10px; line-height: 24px; text-align: center; }
.tray { flex: 1; display: flex; align-items: center; }
.wx { margin: -4px 0 0 76px; }
.n5 { font: bold 11px "Open Sans"; fill: #fff; text-anchor: middle; }
.temp { margin-left: 6px; width: 30px; font-size: 14px; letter-spacing: -.4px; }
.y1 { margin-left: 25px; } .y2 { margin-left: 12px; } .y3 { margin-left: 9px; } .y4 { margin-left: 7px; } .y5 { margin-left: 7px; }
.clock { width: 60px; margin-left: 8px; display: flex; flex-direction: column; align-items: center; font-size: 12px; line-height: 17px; letter-spacing: -.45px; }
.y6 { margin-left: 17px; }
.n2t { font: 12px "Open Sans"; fill: #fff; text-anchor: middle; }
.y7 { margin-left: 14px; }
.pre { font: bold 6.5px "Open Sans"; fill: #111; text-anchor: middle; }
.peek { width: 1px; height: 39px; background: #777; margin-left: 17px; }
.marks { position: absolute; left: 0; top: 0; pointer-events: none; }
```
